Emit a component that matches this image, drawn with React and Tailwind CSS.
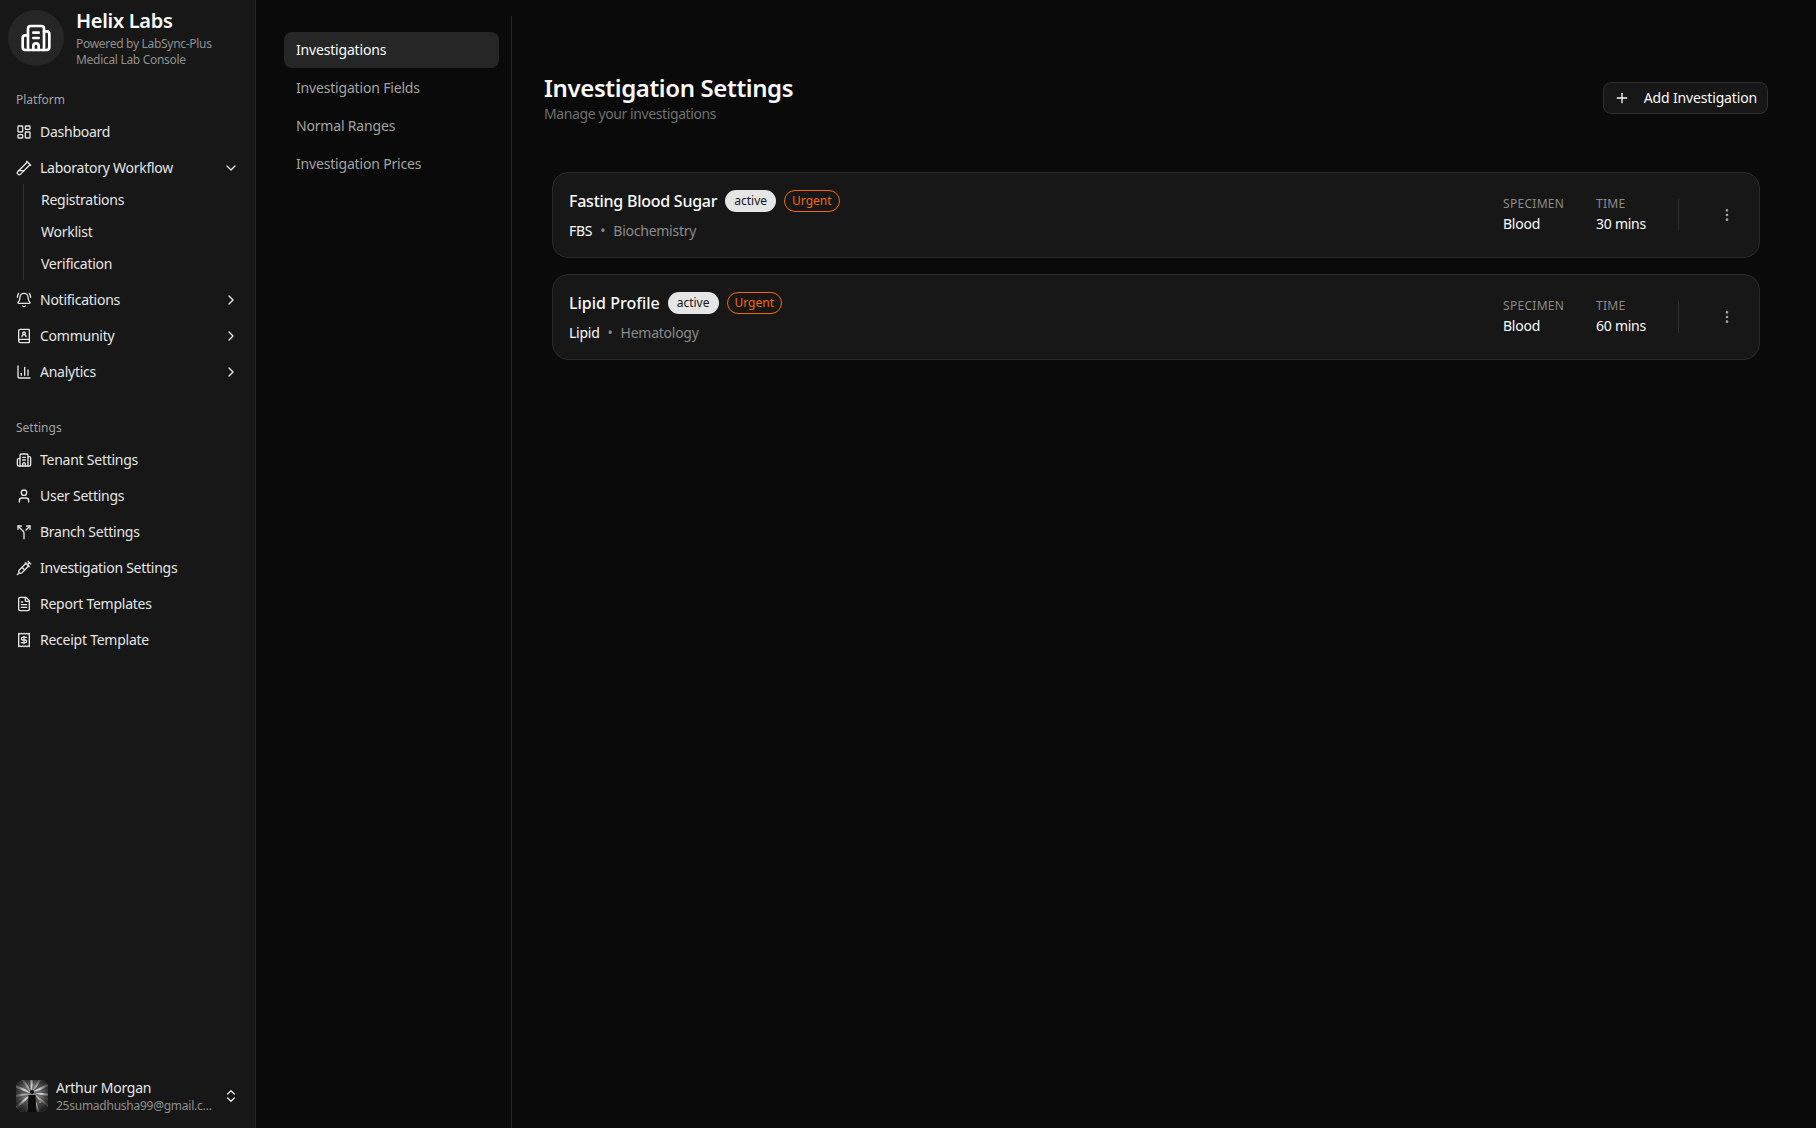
import React from "react";
import { LayoutDashboard, TestTubeDiagonal, BellRing, BookUser, ChartColumn, Building2, User, Split, Syringe, FileText, Receipt, ChevronDown, ChevronRight, ChevronsUpDown, Plus, EllipsisVertical } from "lucide-react";

const font = "font-['Noto_Sans','Open_Sans',sans-serif]";

function NavItem({ icon: Icon, label, chevron }) {
  return (
    <div className="flex h-9 items-center gap-2 px-2 text-[14px] text-[#e5e5e5]">
      <Icon className="size-4 shrink-0" strokeWidth={2} />
      <span className="flex-1 truncate pb-px">{label}</span>
      {chevron === "down" && <ChevronDown className="size-4 shrink-0" />}
      {chevron === "right" && <ChevronRight className="size-4 shrink-0" />}
    </div>
  );
}

function Avatar() {
  const rays = [];
  for (let i = 0; i < 22; i++) {
    const a = (i / 22) * Math.PI * 2 + 0.1;
    const shade = ["#cfcfcf", "#6a6a6a", "#a6a6a6", "#565656"][i % 4];
    rays.push(
      <line key={i} x1="16" y1="13" x2={16 + Math.cos(a) * 24} y2={13 + Math.sin(a) * 24} stroke={shade} strokeWidth="2.2" />
    );
  }
  return (
    <svg viewBox="0 0 32 32" className="size-8 shrink-0 rounded-lg bg-[#5a5a5a]">
      <defs>
        <radialGradient id="vignette" cx="50%" cy="45%" r="58%">
          <stop offset="50%" stopColor="#141414" stopOpacity="0" />
          <stop offset="100%" stopColor="#141414" stopOpacity="0.8" />
        </radialGradient>
      </defs>
      {rays}
      <rect x="0" y="0" width="32" height="32" fill="url(#vignette)" />
      <circle cx="16" cy="12" r="2" fill="#0c0c0c" />
      <path d="M12.5 15h7l1 17h-9z" fill="#0c0c0c" />
      <rect x="23" y="21" width="2" height="2" fill="#a8744f" />
    </svg>
  );
}

function Card({ name, nameTracking, code, dept, time }) {
  return (
    <div className="flex h-[86px] items-center justify-between rounded-2xl border border-[#2a2a2a] bg-[#171717] pl-4 pr-6">
      <div>
        <div className="mt-px flex items-center gap-2">
          <span className={`text-[16px] font-medium text-[#fafafa] ${nameTracking}`}>{name}</span>
          <span className="flex h-[22px] items-center rounded-full bg-[#e5e5e5] px-[9px] text-[12px] tracking-normal text-[#171717]">active</span>
          <span className="flex h-[22px] items-center rounded-full border border-[#f56a00] px-[7px] text-[12px] tracking-normal text-[#f56a00]">Urgent</span>
        </div>
        <div className="mt-[7px] flex items-center gap-2 pb-px text-[14px]">
          <span className="text-[#fafafa]">{code}</span>
          <span className="text-[#8a8a8a]">•</span>
          <span className="text-[#8a8a8a]">{dept}</span>
        </div>
      </div>
      <div className="flex items-center">
        <div className="w-[93px]">
          <div className="text-[12px] tracking-wide text-[#8a8a8a]">SPECIMEN</div>
          <div className="pb-px text-[14px] text-[#fafafa]">Blood</div>
        </div>
        <div className="w-[82px]">
          <div className="text-[12px] tracking-wide text-[#8a8a8a]">TIME</div>
          <div className="pb-px text-[14px] text-[#fafafa]">{time}</div>
        </div>
        <div className="mr-[40px] h-8 w-px bg-[#2e2e2e]" />
        <EllipsisVertical className="size-4 text-[#a3a3a3]" />
      </div>
    </div>
  );
}

export default function App() {
  return (
    <div className={`flex h-[1128px] w-[1816px] overflow-hidden bg-[#0a0a0a] tracking-[-0.25px] ${font}`}>
      <aside className="flex w-[256px] shrink-0 flex-col border-r border-[#262626] bg-[#171717]">
        <div className="flex items-start gap-3 pl-2 pt-[10px]">
          <div className="flex size-14 items-center justify-center rounded-full bg-[#262626]">
            <Building2 className="size-8 text-white" />
          </div>
          <div>
            <div className="text-[20px] font-semibold leading-[22px] tracking-[-0.3px] text-[#fafafa]">Helix Labs</div>
            <div className="mt-1 text-[12px] leading-4 tracking-[-0.3px] text-[#8f8f8f]">Powered by LabSync-Plus</div>
            <div className="text-[12px] leading-4 tracking-[-0.3px] text-[#8f8f8f]">Medical Lab Console</div>
          </div>
        </div>
        <div className="mt-4 px-2">
          <div className="flex h-[30px] items-center px-2 pt-[2px] text-[12px] tracking-normal text-[#a3a3a3]">Platform</div>
          <NavItem icon={LayoutDashboard} label="Dashboard" />
          <NavItem icon={TestTubeDiagonal} label="Laboratory Workflow" chevron="down" />
          <div className="-mt-[2px] mb-[2px] ml-[15px] flex flex-col border-l border-[#2e2e2e] pl-[17px]">
            {["Registrations", "Worklist", "Verification"].map((t) => (
              <div key={t} className="flex h-8 items-center pb-px text-[14px] text-[#e5e5e5]">{t}</div>
            ))}
          </div>
          <NavItem icon={BellRing} label="Notifications" chevron="right" />
          <NavItem icon={BookUser} label="Community" chevron="right" />
          <NavItem icon={ChartColumn} label="Analytics" chevron="right" />
        </div>
        <div className="mt-[22px] px-2">
          <div className="flex h-[30px] items-center px-2 pt-[2px] text-[12px] tracking-normal text-[#a3a3a3]">Settings</div>
          <NavItem icon={Building2} label="Tenant Settings" />
          <NavItem icon={User} label="User Settings" />
          <NavItem icon={Split} label="Branch Settings" />
          <NavItem icon={Syringe} label="Investigation Settings" />
          <NavItem icon={FileText} label="Report Templates" />
          <NavItem icon={Receipt} label="Receipt Template" />
        </div>
        <div className="mt-auto flex items-center gap-2 px-4 pb-[14px]">
          <Avatar />
          <div className="min-w-0 flex-1">
            <div className="mt-[1px] truncate text-[14px] leading-[18px] text-[#e5e5e5]">Arthur Morgan</div>
            <div className="mt-[1px] truncate text-[12px] leading-4 text-[#8f8f8f]">25sumadhusha99@gmail.com</div>
          </div>
          <ChevronsUpDown className="size-4 text-[#e5e5e5]" />
        </div>
      </aside>
      <nav className="mt-4 flex h-[1112px] w-[256px] shrink-0 flex-col gap-[2px] border-r border-[#262626] pl-[28px] pr-3 pt-4 tracking-[-0.18px]">
        <div className="flex h-9 items-center rounded-lg bg-[#262626] px-3 pb-px text-[14px] text-[#fafafa]">Investigations</div>
        {["Investigation Fields", "Normal Ranges", "Investigation Prices"].map((t) => (
          <div key={t} className="flex h-9 items-center px-3 pb-px text-[14px] text-[#a3a3a3]">{t}</div>
        ))}
      </nav>
      <main className="flex-1 pl-8 pr-12">
        <div className="mt-[72px] flex items-center justify-between">
          <div>
            <h1 className="text-[24px] font-semibold leading-8 tracking-[-0.37px] text-[#fafafa]">Investigation Settings</h1>
            <p className="text-[14px] leading-5 tracking-[-0.4px] text-[#6f6f6f]">Manage your investigations</p>
          </div>
          <button className="flex h-8 items-center gap-[14px] rounded-lg border border-[#2e2e2e] bg-[#171717] px-[10px] pb-px text-[14px] tracking-[-0.15px] text-[#fafafa]">
            <Plus className="size-4" />
            Add Investigation
          </button>
        </div>
        <div className="ml-2 mr-2 mt-[48px] flex flex-col gap-4">
          <Card name="Fasting Blood Sugar" nameTracking="tracking-[-0.25px]" code="FBS" dept="Biochemistry" time="30 mins" />
          <Card name="Lipid Profile" nameTracking="tracking-normal" code="Lipid" dept="Hematology" time="60 mins" />
        </div>
      </main>
    </div>
  );
}
